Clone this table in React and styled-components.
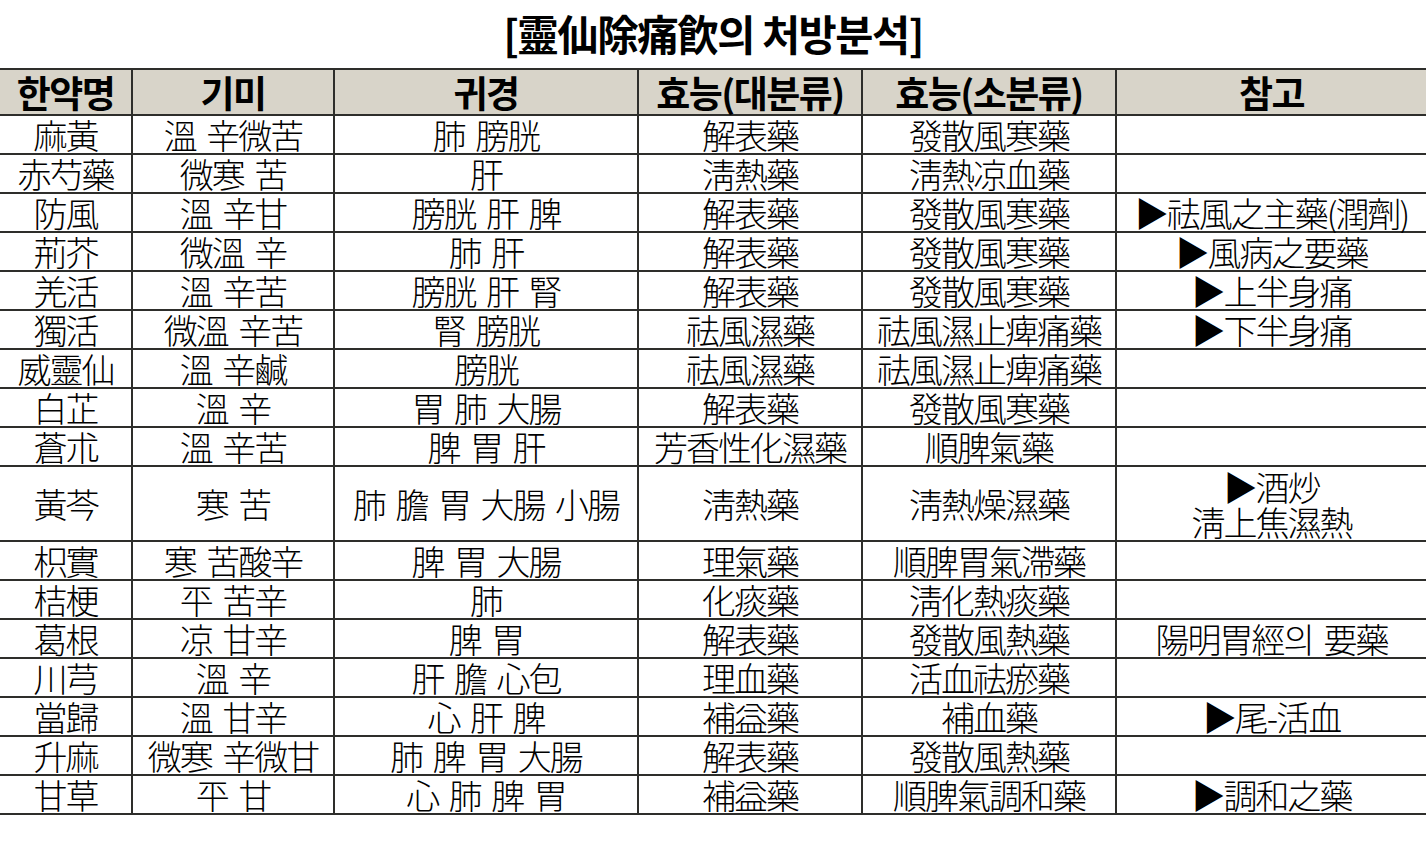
import React from "react";
import styled, { createGlobalStyle } from "styled-components";

const GlobalStyle = createGlobalStyle`
  html, body { margin: 0; padding: 0; background: #ffffff; }
  body { font-family: "Noto Sans CJK KR", "Noto Sans", sans-serif; color: #000; }
`;

const COLS = "131px 202px 304px 224px 254px 1fr";
const LINE = "#2e2e2b";

const Page = styled.div`
  width: 1426px;
  display: flex;
  flex-direction: column;
`;

const Title = styled.h1`
  margin: 0;
  height: 68px;
  display: flex;
  align-items: center;
  justify-content: center;
  font-family: "Noto Sans CJK KR", sans-serif;
  font-weight: 700;
  font-size: 41.5px;
  line-height: 1;
  letter-spacing: -1.5px;
  padding-bottom: 1px;
  box-sizing: border-box;
`;

const Table = styled.div`
  display: flex;
  flex-direction: column;
`;

const Row = styled.div`
  display: grid;
  grid-template-columns: ${COLS};
  height: ${(p) => p.$h}px;
  box-sizing: border-box;
  border-bottom: 2px solid ${LINE};
  border-top: ${(p) => (p.$head ? `2px solid ${LINE}` : "none")};
  background: ${(p) => (p.$head ? "#d8d4c9" : "#ffffff")};
`;

const Cell = styled.div`
  display: flex;
  flex-direction: column;
  align-items: center;
  justify-content: center;
  text-align: center;
  white-space: pre;
  border-left: ${(p) => (p.$first ? "none" : `2px solid ${LINE}`)};
  font-family: "Noto Sans CJK KR", sans-serif;
  font-weight: ${(p) => (p.$head ? 700 : 300)};
  font-size: ${(p) => (p.$head ? "37px" : "34px")};
  letter-spacing: ${(p) => (p.$head ? "-1.5px" : "-2px")};
  word-spacing: ${(p) => (p.$head ? "0" : "5px")};
  line-height: ${(p) => (p.$head ? "44px" : "35px")};
`;

const Line = styled.span`
  display: block;
`;

const headers = ["한약명", "기미", "귀경", "효능(대분류)", "효능(소분류)", "참고"];

const rows = [
  ["麻黃", "溫 辛微苦", "肺 膀胱", "解表藥", "發散風寒藥", ""],
  ["赤芍藥", "微寒 苦", "肝", "淸熱藥", "淸熱凉血藥", ""],
  ["防風", "溫 辛甘", "膀胱 肝 脾", "解表藥", "發散風寒藥", "▶祛風之主藥(潤劑)"],
  ["荊芥", "微溫 辛", "肺 肝", "解表藥", "發散風寒藥", "▶風病之要藥"],
  ["羌活", "溫 辛苦", "膀胱 肝 腎", "解表藥", "發散風寒藥", "▶上半身痛"],
  ["獨活", "微溫 辛苦", "腎 膀胱", "祛風濕藥", "祛風濕止痺痛藥", "▶下半身痛"],
  ["威靈仙", "溫 辛鹹", "膀胱", "祛風濕藥", "祛風濕止痺痛藥", ""],
  ["白芷", "溫 辛", "胃 肺 大腸", "解表藥", "發散風寒藥", ""],
  ["蒼朮", "溫 辛苦", "脾 胃 肝", "芳香性化濕藥", "順脾氣藥", ""],
  ["黃芩", "寒 苦", "肺 膽 胃 大腸 小腸", "淸熱藥", "淸熱燥濕藥", "▶酒炒\n淸上焦濕熱"],
  ["枳實", "寒 苦酸辛", "脾 胃 大腸", "理氣藥", "順脾胃氣滯藥", ""],
  ["桔梗", "平 苦辛", "肺", "化痰藥", "淸化熱痰藥", ""],
  ["葛根", "凉 甘辛", "脾 胃", "解表藥", "發散風熱藥", "陽明胃經의 要藥"],
  ["川芎", "溫 辛", "肝 膽 心包", "理血藥", "活血祛瘀藥", ""],
  ["當歸", "溫 甘辛", "心 肝 脾", "補益藥", "補血藥", "▶尾-活血"],
  ["升麻", "微寒 辛微甘", "肺 脾 胃 大腸", "解表藥", "發散風熱藥", ""],
  ["甘草", "平 甘", "心 肺 脾 胃", "補益藥", "順脾氣調和藥", "▶調和之藥"],
];

export default function App() {
  return (
    <Page>
      <GlobalStyle />
      <Title>[靈仙除痛飮의 처방분석]</Title>
      <Table>
        <Row $head $h={48}>
          {headers.map((h, i) => (
            <Cell key={h} $head $first={i === 0}>
              {h}
            </Cell>
          ))}
        </Row>
        {rows.map((r) => {
          const tall = r.some((c) => c.includes("\n"));
          return (
            <Row key={r[0]} $h={tall ? 75 : 39}>
              {r.map((c, i) => (
                <Cell key={i} $first={i === 0}>
                  {c.split("\n").map((l, j) => (
                    <Line key={j}>{l}</Line>
                  ))}
                </Cell>
              ))}
            </Row>
          );
        })}
      </Table>
    </Page>
  );
}
